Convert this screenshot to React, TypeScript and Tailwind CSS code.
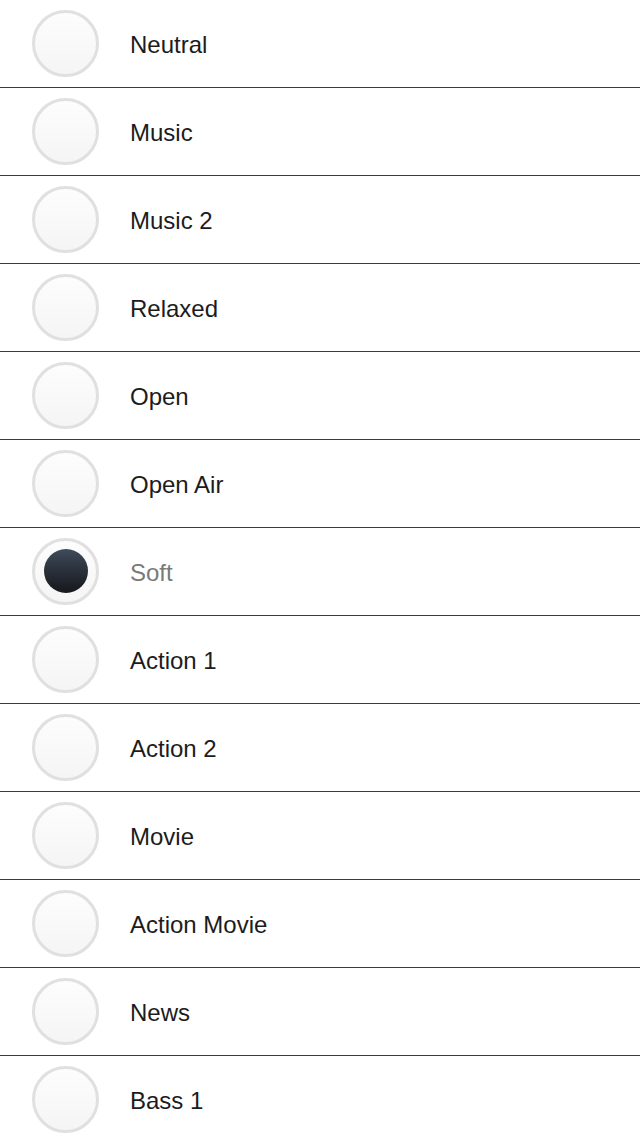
import React from 'react';

const presets = [
  'Neutral',
  'Music',
  'Music 2',
  'Relaxed',
  'Open',
  'Open Air',
  'Soft',
  'Action 1',
  'Action 2',
  'Movie',
  'Action Movie',
  'News',
  'Bass 1',
];

const selected = 'Soft';

function Radio({ on }: { on: boolean }) {
  return (
    <div className="w-[67px] h-[67px] mb-[1px] rounded-full border-[3px] border-[#e0e0e0] bg-gradient-to-b from-[#fdfdfd] to-[#f5f5f5] flex items-center justify-center shrink-0">
      {on && (
        <div className="w-[44px] h-[44px] rounded-full bg-gradient-to-b from-[#404b5b] to-[#16181c]" />
      )}
    </div>
  );
}

export default function App() {
  return (
    <div className="w-[640px] h-[1136px] overflow-hidden bg-white" style={{ fontFamily: '"Liberation Sans", Arial, sans-serif' }}>
      {presets.map(name => {
        const on = name === selected;
        return (
          <div key={name} className="h-[88px] flex items-center border-b border-[#3a3a3a] pl-[32px]">
            <Radio on={on} />
            <span className={`ml-[31px] mt-[2px] text-[24px] ${on ? 'text-[#7a7a7a]' : 'text-[#1c1c1c]'}`}>{name}</span>
          </div>
        );
      })}
    </div>
  );
}
